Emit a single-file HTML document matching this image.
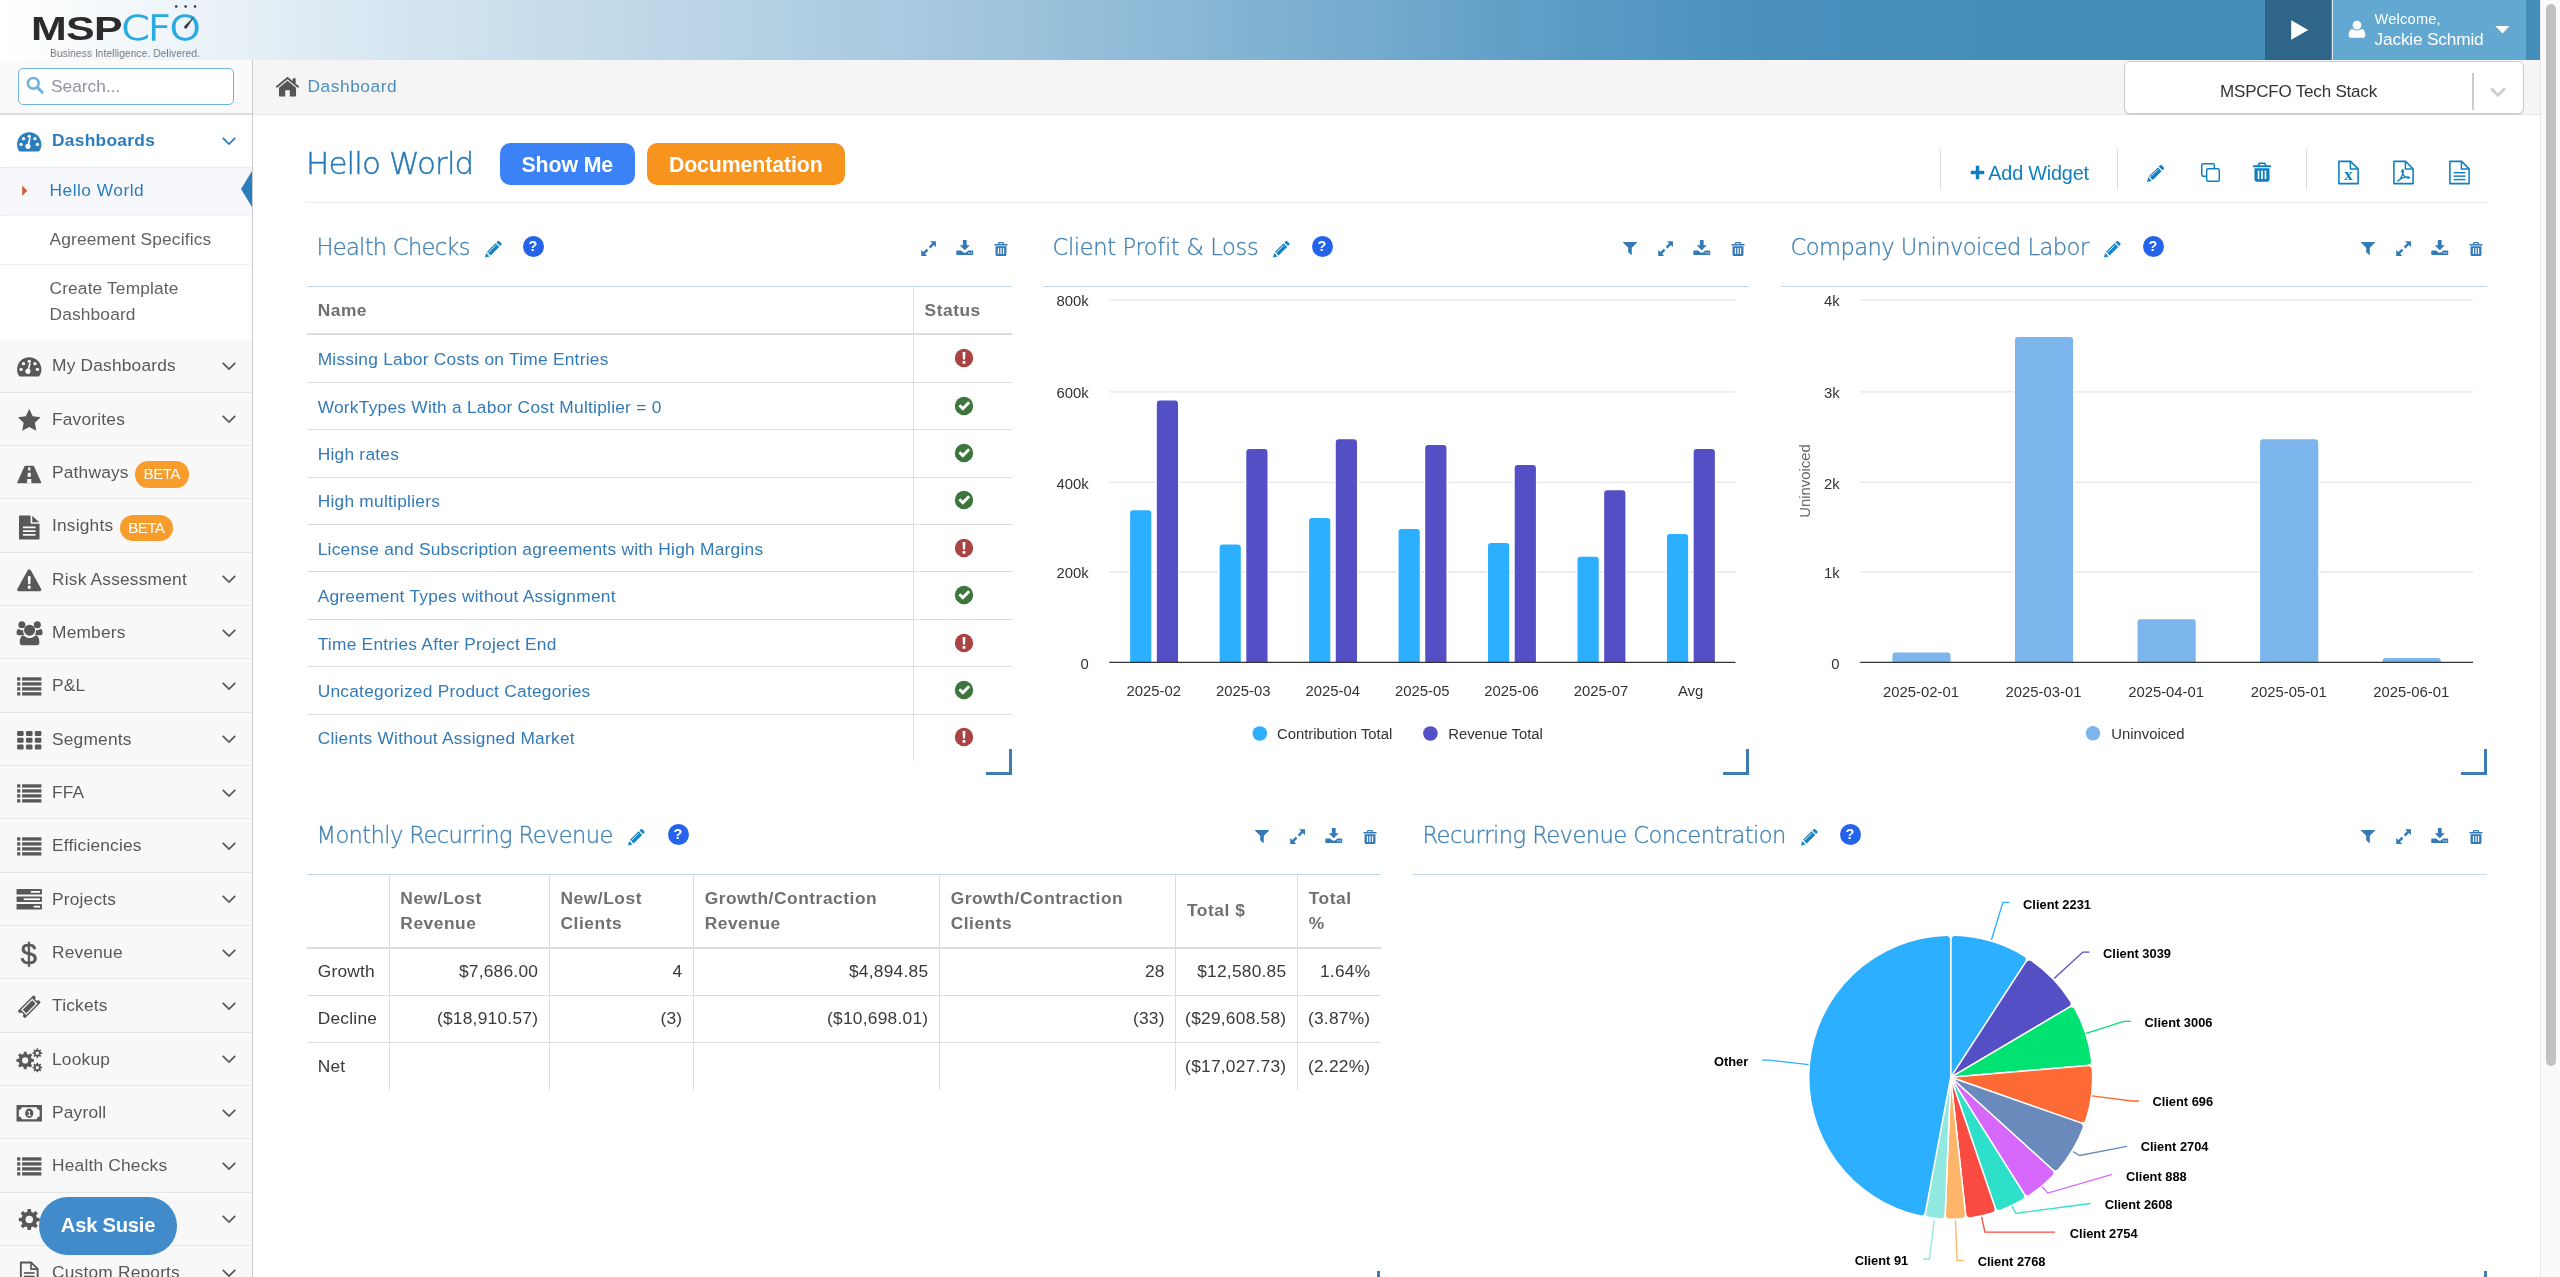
<!DOCTYPE html>
<html lang="en"><head><meta charset="utf-8"><title>Hello World - MSPCFO</title><style>
*{box-sizing:border-box;margin:0;padding:0}
html,body{width:2560px;height:1277px;overflow:hidden;background:#fff}
body{font-family:"Liberation Sans","DejaVu Sans",sans-serif;font-size:17.33px;color:#393939;position:relative;-webkit-font-smoothing:antialiased}
#app{position:absolute;left:0;top:0;width:2560px;height:1277px;will-change:transform;overflow:hidden}
.ic{display:block;overflow:visible}
.abs{position:absolute}
.lt{font-family:"DejaVu Sans Light","DejaVu Sans","Liberation Sans",sans-serif;font-weight:200}
/* header */
#hdr{position:absolute;left:0;top:0;width:2540px;height:60px;background:linear-gradient(90deg,#ffffff 0%,#f1f6fa 6%,#d4e5f0 16%,#b5d1e4 30%,#9ec3dc 40%,#7aaed0 52%,#5a9bc5 62%,#4990bd 70%,#438eb9 78%,#438eb9 100%)}
#logo{position:absolute;left:0;top:0;width:260px;height:60px}
#play{position:absolute;left:2265px;top:0;width:66px;height:60px;background:#2e6589}
#usr{position:absolute;left:2331.6px;top:0;width:194.4px;height:60px;background:#62a8d1;color:#fff;border-left:1.4px solid #dbe7f0}
#usr .t1{position:absolute;left:42px;top:9.6px;font-size:14.6px;line-height:18px;letter-spacing:.2px}
#usr .t2{position:absolute;left:42px;top:28.2px;font-size:17.33px;line-height:22px;letter-spacing:-.22px}
/* scrollbar */
#sb{position:absolute;left:2540px;top:0;width:20px;height:1277px;background:#fafafa;border-left:1.5px solid #e8e8e8}
#sb i{position:absolute;left:5px;top:4px;width:10px;height:1062px;border-radius:5px;background:#c1c1c1}
/* sidebar */
#side{position:absolute;left:0;top:60px;width:252.7px;height:1217px;background:#f8f8f8;border-right:1.5px solid #cccccc;overflow:hidden}
#srch{position:absolute;left:0;top:0;width:252px;height:54.67px;background:#fafafa;border-bottom:2px solid #dcdcdc}
#srch .box{position:absolute;left:18px;top:7.6px;width:216px;height:37px;border:1.5px solid #6fb3e0;border-radius:5px;background:#fff}
#srch .box span{position:absolute;left:32px;top:7px;font-size:17.33px;line-height:20px;color:#8d95a3;letter-spacing:0}
#nav{position:absolute;left:0;top:54.67px;width:252px}
.ni{position:relative;height:53.33px;border-top:1.33px solid #fcfcfc;border-bottom:1.33px solid #e5e5e5;background:#f8f8f8;color:#585858}
.ni .i{position:absolute;left:15.7px;top:12.8px;width:26.5px;height:26.5px}
.ni .t{position:absolute;left:52px;top:14px;font-size:17.33px;line-height:22px;white-space:nowrap;letter-spacing:.2px}
.ni .c{position:absolute;left:219px;top:15.7px;width:20px;height:20px}
.ni.act{background:#fff;color:#2b7dbc;border-bottom:0;height:52px}
.ni.act .t{font-weight:bold;letter-spacing:.3px;top:13px}
.beta{display:inline-block;position:relative;top:1.2px;background:#f89c2c;color:#fff;font-size:15.2px;line-height:26.6px;height:26.3px;padding:0 8.9px 0 8.7px;border-radius:13.2px;margin:-6px 0 -6px 6.2px;vertical-align:baseline;letter-spacing:-.6px}
.sub{background:#fff;position:relative}
.si{position:relative;border-top:1.33px dotted #e4e4e4;color:#616161;padding:9.6px 0 12.2px 49.5px;font-size:17.33px;line-height:26px;letter-spacing:.15px}
.si.on{background:#f6f7fb;color:#2b7dbc}
/* breadcrumbs */
#bc{position:absolute;left:252.5px;top:60px;width:2287.5px;height:54.67px;background:#f5f5f5;border-bottom:1.5px solid #e5e5e5}
#bc .home{position:absolute;left:22px;top:13px}
#bc .t{position:absolute;left:55px;top:15.3px;font-size:17.33px;line-height:22px;color:#4c8fbd;letter-spacing:.55px}
#sel{position:absolute;left:2123.5px;top:60.6px;width:400px;height:53.4px;background:#fff;border:1.33px solid #cccccc;border-radius:6px;box-shadow:0 1px 1px rgba(0,0,0,.08)}
#sel .t{position:absolute;left:0;width:348px;top:19px;text-align:center;font-size:17px;line-height:22px;color:#333;letter-spacing:-.2px}
#sel .d{position:absolute;left:347.6px;top:11px;width:2px;height:37.5px;background:#cccccc}
#sel .c{position:absolute;left:365px;top:21px}
/* page head */
#ttl{position:absolute;left:306px;top:141px;font-size:31px;line-height:44px;color:#2679b5;letter-spacing:-.9px;white-space:nowrap;-webkit-text-stroke:.4px #2679b5}
.btn{position:absolute;top:142.6px;height:42.8px;border-radius:10.5px;color:#fff;font-weight:bold;font-size:21.3px;line-height:44.6px;text-align:center;letter-spacing:-.1px}
#dot1{position:absolute;left:307px;top:201.500px;width:2180px;height:0;border-top:1.33px dotted #dcdcdc}
.vsep{position:absolute;top:149px;width:1.500px;height:41px;background:#dddddd}
#addw{position:absolute;left:1988.3px;top:160.5px;font-size:19.8px;line-height:24px;color:#0f7fc1;white-space:nowrap;letter-spacing:-.17px}

.wt{position:absolute;font-size:22.6px;line-height:34px;color:#4383b4;white-space:nowrap;letter-spacing:-.72px;-webkit-text-stroke:.32px #4383b4}
.wline{position:absolute;height:1.33px;background:#c3d9ea}
.help{position:absolute;width:21px;height:21px;border-radius:50%;background:#2563eb;color:#fff;font:bold 14.500px "Liberation Sans",sans-serif;line-height:21px;text-align:center}
.rz{position:absolute;width:26.5px;height:26.5px;border-right:3.4px solid #3d7db3;border-bottom:3.4px solid #3d7db3}
table.t{position:absolute;border-collapse:collapse;font-size:17.33px;letter-spacing:.25px}
table.t th{font-weight:bold;color:#707070;text-align:left;border-bottom:2.67px solid #dddddd;border-left:1.33px solid #dddddd;padding:0 0 0 10.67px;letter-spacing:.55px}
table.t td{border-top:1.33px solid #dddddd;border-left:1.33px solid #dddddd;padding:2px 0 0 10.67px;color:#393939;white-space:nowrap}
table.t th:first-child,table.t td:first-child{border-left:0}
table.t a{color:#337ab7;text-decoration:none}
table.t td.r{text-align:right;padding:2px 10.67px 0 0}
svg text{font-family:"Liberation Sans",sans-serif}

table.m th{vertical-align:middle;line-height:24.76px;padding:0 0 0 10.67px}
table.m td{padding-top:0}
table.m td.r{padding-top:0}
</style></head><body><div id="app"><div id="hdr">
<div id="logo">
 <div class="abs" style="left:31.4px;top:9.3px;font:bold 34px 'Liberation Sans',sans-serif;color:#2c2a2b;line-height:38px;transform:scale(1.262,1.0);transform-origin:0 0;letter-spacing:-.5px;will-change:transform">MSP</div>
 <div class="abs lt" style="left:120.5px;top:8.5px;font-size:34.5px;color:#29abe2;line-height:38px;letter-spacing:-1.4px;transform:scaleX(1.175);transform-origin:0 0;-webkit-text-stroke:1.35px #29abe2;will-change:transform">CFO</div>
 <svg class="abs" style="left:170px;top:0" width="34" height="44" viewBox="0 0 34 44"><g fill="#2c2a2b"><circle cx="6.200" cy="6.600" r="1.250"/><circle cx="15.600" cy="6.600" r="1.250"/><circle cx="25" cy="6.600" r="1.250"/></g><path d="M14.300 26.300L24.900 15.800 16.700 28.300a1.600 1.600 0 0 1-2.400-2z" fill="#3a3a3c"/></svg>
 <div class="abs" style="left:49.500px;top:45.8px;font-size:11.3px;line-height:14px;color:#72777d;white-space:nowrap;letter-spacing:.1px;transform:scaleX(.9);transform-origin:0 0;will-change:transform">Business Intelligence. Delivered.</div>
</div>
<div id="play"><svg class="ic " width="24" height="24" viewBox="0 0 24 24" style="color:#fff;position:absolute;left:22px;top:17.5px"><path fill="currentColor" d="M4.200 2.200l17 9.800-17 9.800z"/></svg></div>
<div id="usr"><svg class="ic " width="20" height="20" viewBox="0 0 24 24" style="color:#fff;position:absolute;left:14px;top:19px"><g fill="currentColor"><circle cx="12" cy="7.300" r="5.300"/><path d="M4.300 22.500c-1.300 0-2.300-.9-2.300-2.300 0-4.700 1.500-8 4.300-8.200.5 0 2.200 1.900 5.700 1.900s5.200-1.900 5.700-1.900c2.800.2 4.300 3.500 4.300 8.200 0 1.400-1 2.300-2.300 2.300z"/></g></svg><div class="t1">Welcome,</div><div class="t2">Jackie Schmid</div><svg class="ic " width="19" height="19" viewBox="0 0 24 24" style="color:#fff;position:absolute;left:160px;top:20px"><path fill="currentColor" d="M3 7.500h18l-9 9.500z"/></svg></div>
</div>
<div id="sb"><i></i></div><div id="side"><div id="srch"><div class="box"><svg class="ic " width="19.5" height="19.5" viewBox="0 0 24 24" style="color:#6fb3e0;position:absolute;left:5.5px;top:6.6px"><circle cx="10.200" cy="10.200" r="6.600" fill="none" stroke="currentColor" stroke-width="3.200"/><path d="M15.200 15.200l6 6" stroke="currentColor" stroke-width="3.800" stroke-linecap="round"/></svg><span>Search...</span></div></div><div id="nav"><div class="ni act"><div class="i"><svg class="ic " width="26.5" height="26.5" viewBox="0 0 24 24" style=""><g transform="translate(0 .7)"><path fill="currentColor" d="M12 3.2C5.9 3.2 1 8.1 1 14.2c0 2.1.6 4.1 1.7 5.8.2.4.6.6 1 .6h16.6c.4 0 .8-.2 1-.6 1.1-1.700 1.700-3.700 1.700-5.800C23 8.1 18.100 3.200 12 3.200z"/><g fill="#fff"><circle cx="4.600" cy="14.200" r="1.500"/><circle cx="6.800" cy="9" r="1.500"/><circle cx="12" cy="6.800" r="1.500"/><circle cx="17.200" cy="9" r="1.500"/><circle cx="19.400" cy="14.200" r="1.500"/><path d="M13.400 8.800l-1.300 5.100a2.400 2.400 0 1 1-1.500-.4l1.300-5.100z"/></g></g></svg></div><div class="t">Dashboards</div><div class="c"><svg class="ic " width="20" height="20" viewBox="0 0 24 24" style=""><path fill="none" stroke="currentColor" stroke-width="2.100" d="M4.500 8.200l7.500 7.500 7.500-7.500"/></svg></div></div><div class="sub"><div class="si on" style="letter-spacing:.5px"><svg class="ic " width="15.5" height="15.5" viewBox="0 0 24 24" style="color:#c86139;position:absolute;left:16.8px;top:15.3px"><path fill="currentColor" d="M8 4l8 8-8 8z"/></svg>Hello World<svg class="abs" style="right:0;top:3.4px" width="11" height="36" viewBox="0 0 11 36"><path d="M11 0L0 18l11 18z" fill="#2b7dbc"/></svg></div><div class="si">Agreement Specifics</div><div class="si" style="padding-top:9.4px;padding-bottom:12.8px">Create Template<br>Dashboard</div></div><div class="ni"><div class="i"><svg class="ic " width="26.5" height="26.5" viewBox="0 0 24 24" style=""><g transform="translate(0 .7)"><path fill="currentColor" d="M12 3.2C5.9 3.2 1 8.1 1 14.2c0 2.1.6 4.1 1.7 5.8.2.4.6.6 1 .6h16.6c.4 0 .8-.2 1-.6 1.1-1.700 1.700-3.700 1.700-5.800C23 8.1 18.100 3.200 12 3.200z"/><g fill="#fff"><circle cx="4.600" cy="14.200" r="1.500"/><circle cx="6.800" cy="9" r="1.500"/><circle cx="12" cy="6.800" r="1.500"/><circle cx="17.200" cy="9" r="1.500"/><circle cx="19.400" cy="14.200" r="1.500"/><path d="M13.400 8.800l-1.300 5.100a2.400 2.400 0 1 1-1.500-.4l1.300-5.100z"/></g></g></svg></div><div class="t">My Dashboards</div><div class="c"><svg class="ic " width="20" height="20" viewBox="0 0 24 24" style=""><path fill="none" stroke="currentColor" stroke-width="2.100" d="M4.500 8.200l7.500 7.500 7.500-7.500"/></svg></div></div><div class="ni"><div class="i"><svg class="ic " width="26.5" height="26.5" viewBox="0 0 24 24" style=""><path fill="currentColor" d="M12 1.800l3.150 6.550 7.150 1-5.200 5 1.250 7.150L12 18.100 5.650 21.500l1.250-7.150-5.200-5 7.150-1z"/></svg></div><div class="t">Favorites</div><div class="c"><svg class="ic " width="20" height="20" viewBox="0 0 24 24" style=""><path fill="none" stroke="currentColor" stroke-width="2.100" d="M4.500 8.200l7.500 7.500 7.500-7.500"/></svg></div></div><div class="ni"><div class="i"><svg class="ic " width="26.5" height="26.5" viewBox="0 0 24 24" style=""><path fill="currentColor" d="M8.6 5.2h6.8c.5 0 .9.3 1.100.8l6.300 14.100c.2.500-.1 1-.7 1H1.900c-.6 0-.9-.5-.7-1L7.500 6c.2-.5.6-.8 1.100-.8z"/><g fill="#f8f8f8"><path d="M11.100 6.600h1.800l.2 3h-2.200z"/><path d="M10.700 11.500h2.600l.3 3.700h-3.200z"/><path d="M10.200 17.200h3.600l.2 3.900h-4z"/></g></svg></div><div class="t">Pathways<span class="beta">BETA</span></div></div><div class="ni"><div class="i"><svg class="ic " width="26.5" height="26.5" viewBox="0 0 24 24" style=""><path fill="currentColor" d="M3.700 2.200h9.500v6.600c0 .6.400 1 1 1h7.100v13.300c0 .6-.4 1-1 1H3.700c-.6 0-1-.4-1-1v-19.900c0-.6.400-1 1-1z"/><path fill="currentColor" d="M14.700 2.500l6.300 5.800h-6.300z"/><g fill="#f8f8f8"><rect x="6.300" y="12.200" width="11.400" height="1.600"/><rect x="6.300" y="15.600" width="11.400" height="1.600"/><rect x="6.300" y="19" width="11.400" height="1.600"/></g></svg></div><div class="t">Insights<span class="beta">BETA</span></div></div><div class="ni"><div class="i"><svg class="ic " width="26.5" height="26.5" viewBox="0 0 24 24" style=""><path fill="currentColor" d="M13.300 2.700l9.500 17.200c.5.900-.1 2-1.200 2H2.400c-1.100 0-1.700-1.100-1.200-2L10.700 2.700c.5-1 2-1 2.600 0z"/><g fill="#fff"><path d="M10.700 8.400h2.600l-.3 7.300h-2z"/><rect x="10.700" y="17" width="2.600" height="2.600" rx=".3"/></g></svg></div><div class="t">Risk Assessment</div><div class="c"><svg class="ic " width="20" height="20" viewBox="0 0 24 24" style=""><path fill="none" stroke="currentColor" stroke-width="2.100" d="M4.500 8.200l7.500 7.500 7.500-7.500"/></svg></div></div><div class="ni"><div class="i"><svg class="ic " width="26.5" height="26.5" viewBox="0 0 24 24" style=""><g fill="currentColor" transform="translate(.3 0)"><circle cx="12" cy="9.200" r="5"/><path d="M5.300 22.900c-1.300 0-2.200-.9-2.200-2.200 0-3.700 1-6.700 3.400-6.700.4 0 2.500 2.300 5.500 2.300s5.100-2.300 5.500-2.300c2.400 0 3.400 3 3.400 6.700 0 1.300-.9 2.200-2.200 2.200z"/><circle cx="5" cy="4.300" r="3.200"/><circle cx="19" cy="4.300" r="3.200"/><path d="M2.700 13.900C1.300 13.900.2 13.100.2 11.900c0-1.900.5-3.700 1.900-3.700.4 0 1.400 1 2.900 1 .5 0 .9-.1 1.300-.2-.1.400-.1.800-.1 1.200 0 1.300.4 2.500 1.100 3.400-1.600.1-2.400.3-2.900.3z"/><path d="M21.300 13.900c1.400 0 2.500-.8 2.500-2 0-1.900-.5-3.700-1.900-3.700-.4 0-1.400 1-2.900 1-.5 0-.9-.1-1.300-.2.1.400.1.800.1 1.200 0 1.300-.4 2.500-1.100 3.400 1.600.1 2.400.3 2.900.3z"/></g></svg></div><div class="t">Members</div><div class="c"><svg class="ic " width="20" height="20" viewBox="0 0 24 24" style=""><path fill="none" stroke="currentColor" stroke-width="2.100" d="M4.500 8.200l7.500 7.500 7.500-7.500"/></svg></div></div><div class="ni"><div class="i"><svg class="ic " width="26.5" height="26.5" viewBox="0 0 24 24" style=""><g fill="currentColor"><rect x="1" y="3.9" width="2.900" height="3"/><rect x="5.500" y="3.9" width="17.500" height="3"/><rect x="1" y="8.4" width="2.900" height="3"/><rect x="5.500" y="8.4" width="17.500" height="3"/><rect x="1" y="12.9" width="2.900" height="3"/><rect x="5.500" y="12.9" width="17.500" height="3"/><rect x="1" y="17.4" width="2.900" height="3"/><rect x="5.500" y="17.4" width="17.500" height="3"/></g></svg></div><div class="t">P&amp;L</div><div class="c"><svg class="ic " width="20" height="20" viewBox="0 0 24 24" style=""><path fill="none" stroke="currentColor" stroke-width="2.100" d="M4.500 8.200l7.500 7.500 7.500-7.500"/></svg></div></div><div class="ni"><div class="i"><svg class="ic " width="26.5" height="26.5" viewBox="0 0 24 24" style=""><g fill="currentColor"><rect x="1" y="3.7" width="5.900" height="4.400" rx="1.100"/><rect x="9.05" y="3.7" width="5.900" height="4.400" rx="1.100"/><rect x="17.1" y="3.7" width="5.900" height="4.400" rx="1.100"/><rect x="1" y="9.8" width="5.900" height="4.400" rx="1.100"/><rect x="9.05" y="9.8" width="5.900" height="4.400" rx="1.100"/><rect x="17.1" y="9.8" width="5.900" height="4.400" rx="1.100"/><rect x="1" y="15.9" width="5.900" height="4.400" rx="1.100"/><rect x="9.05" y="15.9" width="5.900" height="4.400" rx="1.100"/><rect x="17.1" y="15.9" width="5.900" height="4.400" rx="1.100"/></g></svg></div><div class="t">Segments</div><div class="c"><svg class="ic " width="20" height="20" viewBox="0 0 24 24" style=""><path fill="none" stroke="currentColor" stroke-width="2.100" d="M4.500 8.200l7.500 7.500 7.500-7.500"/></svg></div></div><div class="ni"><div class="i"><svg class="ic " width="26.5" height="26.5" viewBox="0 0 24 24" style=""><g fill="currentColor"><rect x="1" y="3.9" width="2.900" height="3"/><rect x="5.500" y="3.9" width="17.500" height="3"/><rect x="1" y="8.4" width="2.900" height="3"/><rect x="5.500" y="8.4" width="17.500" height="3"/><rect x="1" y="12.9" width="2.900" height="3"/><rect x="5.500" y="12.9" width="17.500" height="3"/><rect x="1" y="17.4" width="2.900" height="3"/><rect x="5.500" y="17.4" width="17.500" height="3"/></g></svg></div><div class="t">FFA</div><div class="c"><svg class="ic " width="20" height="20" viewBox="0 0 24 24" style=""><path fill="none" stroke="currentColor" stroke-width="2.100" d="M4.500 8.200l7.500 7.500 7.500-7.500"/></svg></div></div><div class="ni"><div class="i"><svg class="ic " width="26.5" height="26.5" viewBox="0 0 24 24" style=""><g fill="currentColor"><rect x="1" y="3.9" width="2.900" height="3"/><rect x="5.500" y="3.9" width="17.500" height="3"/><rect x="1" y="8.4" width="2.900" height="3"/><rect x="5.500" y="8.4" width="17.500" height="3"/><rect x="1" y="12.9" width="2.900" height="3"/><rect x="5.500" y="12.9" width="17.500" height="3"/><rect x="1" y="17.4" width="2.900" height="3"/><rect x="5.500" y="17.4" width="17.500" height="3"/></g></svg></div><div class="t">Efficiencies</div><div class="c"><svg class="ic " width="20" height="20" viewBox="0 0 24 24" style=""><path fill="none" stroke="currentColor" stroke-width="2.100" d="M4.500 8.200l7.500 7.500 7.500-7.500"/></svg></div></div><div class="ni"><div class="i"><svg class="ic " width="26.5" height="26.5" viewBox="0 0 24 24" style=""><g fill="currentColor"><rect x="0.500" y="2.800" width="23" height="5" rx=".6"/><rect x="0.500" y="9.500" width="23" height="5" rx=".6"/><rect x="0.500" y="16.200" width="23" height="5" rx=".6"/></g><g fill="#fff"><rect x="13.400" y="4.500" width="8.400" height="1.600"/><rect x="7" y="11.200" width="14.800" height="1.600"/><rect x="16" y="17.900" width="5.800" height="1.600"/></g></svg></div><div class="t">Projects</div><div class="c"><svg class="ic " width="20" height="20" viewBox="0 0 24 24" style=""><path fill="none" stroke="currentColor" stroke-width="2.100" d="M4.500 8.200l7.500 7.500 7.500-7.500"/></svg></div></div><div class="ni"><div class="i" style="font:normal 29px 'Liberation Sans',sans-serif;line-height:28px;text-align:center;top:12.5px;-webkit-text-stroke:.6px #585858">$</div><div class="t">Revenue</div><div class="c"><svg class="ic " width="20" height="20" viewBox="0 0 24 24" style=""><path fill="none" stroke="currentColor" stroke-width="2.100" d="M4.500 8.200l7.500 7.500 7.500-7.500"/></svg></div></div><div class="ni"><div class="i"><svg class="ic " width="26.5" height="26.5" viewBox="0 0 24 24" style=""><g transform="translate(1.200 1.600) scale(.9) rotate(-45 12 12)"><path fill="currentColor" d="M1.500 6.800h21c.5 0 .9.400.9.900v2.300a2 2 0 0 0 0 4v2.300c0 .5-.4.900-.9.900h-21c-.5 0-.9-.4-.9-.9V14a2 2 0 0 0 0-4V7.700c0-.5.400-.9.900-.9z"/><rect x="4.600" y="8.900" width="14.800" height="6.200" fill="none" stroke="#f8f8f8" stroke-width="1.300"/></g></svg></div><div class="t">Tickets</div><div class="c"><svg class="ic " width="20" height="20" viewBox="0 0 24 24" style=""><path fill="none" stroke="currentColor" stroke-width="2.100" d="M4.500 8.200l7.500 7.500 7.500-7.500"/></svg></div></div><div class="ni"><div class="i"><svg class="ic " width="26.5" height="26.5" viewBox="0 0 24 24" style=""><path fill="currentColor" fill-rule="evenodd" d="M14.12 11.65 L16.20 11.85 L16.20 14.35 L14.12 14.55 L13.44 16.19 L14.77 17.80 L13.00 19.57 L11.39 18.24 L9.75 18.92 L9.55 21.00 L7.05 21.00 L6.85 18.92 L5.21 18.24 L3.60 19.57 L1.83 17.80 L3.16 16.19 L2.48 14.55 L0.40 14.35 L0.40 11.85 L2.48 11.65 L3.16 10.01 L1.83 8.40 L3.60 6.63 L5.21 7.96 L6.85 7.28 L7.05 5.20 L9.55 5.20 L9.75 7.28 L11.39 7.96 L13.00 6.63 L14.77 8.40 L13.44 10.01Z M11.10 13.10 A2.8 2.8 0 1 0 5.50 13.10 A2.8 2.8 0 1 0 11.10 13.10Z"/><path fill="currentColor" fill-rule="evenodd" d="M22.41 5.73 L23.65 5.81 L23.65 7.19 L22.41 7.27 L22.04 8.15 L22.86 9.09 L21.89 10.06 L20.95 9.24 L20.07 9.61 L19.99 10.85 L18.61 10.85 L18.53 9.61 L17.65 9.24 L16.71 10.06 L15.74 9.09 L16.56 8.15 L16.19 7.27 L14.95 7.19 L14.95 5.81 L16.19 5.73 L16.56 4.85 L15.74 3.91 L16.71 2.94 L17.65 3.76 L18.53 3.39 L18.61 2.15 L19.99 2.15 L20.07 3.39 L20.95 3.76 L21.89 2.94 L22.86 3.91 L22.04 4.85Z M20.80 6.50 A1.5 1.5 0 1 0 17.80 6.50 A1.5 1.5 0 1 0 20.80 6.50Z"/><path fill="currentColor" fill-rule="evenodd" d="M22.41 18.73 L23.65 18.81 L23.65 20.19 L22.41 20.27 L22.04 21.15 L22.86 22.09 L21.89 23.06 L20.95 22.24 L20.07 22.61 L19.99 23.85 L18.61 23.85 L18.53 22.61 L17.65 22.24 L16.71 23.06 L15.74 22.09 L16.56 21.15 L16.19 20.27 L14.95 20.19 L14.95 18.81 L16.19 18.73 L16.56 17.85 L15.74 16.91 L16.71 15.94 L17.65 16.76 L18.53 16.39 L18.61 15.15 L19.99 15.15 L20.07 16.39 L20.95 16.76 L21.89 15.94 L22.86 16.91 L22.04 17.85Z M20.80 19.50 A1.5 1.5 0 1 0 17.80 19.50 A1.5 1.5 0 1 0 20.80 19.50Z"/></svg></div><div class="t">Lookup</div><div class="c"><svg class="ic " width="20" height="20" viewBox="0 0 24 24" style=""><path fill="none" stroke="currentColor" stroke-width="2.100" d="M4.500 8.200l7.500 7.500 7.500-7.500"/></svg></div></div><div class="ni"><div class="i"><svg class="ic " width="26.5" height="26.5" viewBox="0 0 24 24" style=""><path fill="currentColor" fill-rule="evenodd" d="M.5 4.600h23v14.800H.5z M2.600 9a3 3 0 0 0 2.700-2.500h13.400A3 3 0 0 0 21.400 9v6a3 3 0 0 0-2.700 2.500H5.300A3 3 0 0 0 2.600 15z"/><ellipse cx="12" cy="12" rx="3.700" ry="4.300" fill="currentColor"/><text x="12" y="14.700" font-size="7.200" font-weight="bold" font-family="Liberation Serif,serif" text-anchor="middle" fill="#f8f8f8">1</text></svg></div><div class="t">Payroll</div><div class="c"><svg class="ic " width="20" height="20" viewBox="0 0 24 24" style=""><path fill="none" stroke="currentColor" stroke-width="2.100" d="M4.500 8.200l7.500 7.500 7.500-7.500"/></svg></div></div><div class="ni"><div class="i"><svg class="ic " width="26.5" height="26.5" viewBox="0 0 24 24" style=""><g fill="currentColor"><rect x="1" y="3.9" width="2.900" height="3"/><rect x="5.500" y="3.9" width="17.500" height="3"/><rect x="1" y="8.4" width="2.900" height="3"/><rect x="5.500" y="8.4" width="17.500" height="3"/><rect x="1" y="12.9" width="2.900" height="3"/><rect x="5.500" y="12.9" width="17.500" height="3"/><rect x="1" y="17.4" width="2.900" height="3"/><rect x="5.500" y="17.4" width="17.500" height="3"/></g></svg></div><div class="t">Health Checks</div><div class="c"><svg class="ic " width="20" height="20" viewBox="0 0 24 24" style=""><path fill="none" stroke="currentColor" stroke-width="2.100" d="M4.500 8.200l7.500 7.500 7.500-7.500"/></svg></div></div><div class="ni"><div class="i"><svg class="ic " width="26.5" height="26.5" viewBox="0 0 24 24" style=""><path fill="currentColor" fill-rule="evenodd" d="M18.99 10.56 L21.48 10.80 L21.48 13.80 L18.99 14.04 L18.17 16.01 L19.77 17.94 L17.64 20.07 L15.71 18.47 L13.74 19.29 L13.50 21.78 L10.50 21.78 L10.26 19.29 L8.29 18.47 L6.36 20.07 L4.23 17.94 L5.83 16.01 L5.01 14.04 L2.52 13.80 L2.52 10.80 L5.01 10.56 L5.83 8.59 L4.23 6.66 L6.36 4.53 L8.29 6.13 L10.26 5.31 L10.50 2.82 L13.50 2.82 L13.74 5.31 L15.71 6.13 L17.64 4.53 L19.77 6.66 L18.17 8.59Z M15.40 12.30 A3.4 3.4 0 1 0 8.60 12.30 A3.4 3.4 0 1 0 15.40 12.30Z"/></svg></div><div class="t">Settings</div><div class="c"><svg class="ic " width="20" height="20" viewBox="0 0 24 24" style=""><path fill="none" stroke="currentColor" stroke-width="2.100" d="M4.500 8.200l7.500 7.500 7.500-7.500"/></svg></div></div><div class="ni"><div class="i"><svg class="ic " width="26.5" height="26.5" viewBox="0 0 24 24" style=""><path fill="none" stroke="currentColor" stroke-width="1.700" stroke-linejoin="round" d="M4.400 2.300h9.400l5.800 5.800v13.600H4.400z"/><path fill="none" stroke="currentColor" stroke-width="1.500" stroke-linejoin="round" d="M13.600 2.500v5.800h5.800"/><g fill="currentColor"><rect x="7.200" y="11" width="9.600" height="1.500"/><rect x="7.200" y="14.200" width="9.600" height="1.500"/><rect x="7.200" y="17.400" width="9.600" height="1.500"/></g></svg></div><div class="t">Custom Reports</div><div class="c"><svg class="ic " width="20" height="20" viewBox="0 0 24 24" style=""><path fill="none" stroke="currentColor" stroke-width="2.100" d="M4.500 8.200l7.500 7.500 7.500-7.500"/></svg></div></div></div></div><div class="abs" style="left:39px;top:1197px;width:138px;height:57.5px;border-radius:28.75px;background:#428bca;color:#fff;font-weight:bold;font-size:20.2px;line-height:57.6px;text-align:center;letter-spacing:-.25px">Ask Susie</div><div id="bc"><svg class="ic " width="25" height="25" viewBox="0 0 24 24" style="color:#555;position:absolute;left:22.5px;top:13.5px"><g fill="currentColor"><path d="M12 2.600L.7 12l1.200 1.400L12 5l10.100 8.400 1.200-1.400-3.500-2.900V4h-2.800v2.700z"/><path d="M12 6.500l-8.200 6.800v7.500c0 .4.300.7.700.7h5.300v-5.800h4.400v5.800h5.300c.4 0 .7-.3.700-.7v-7.500z"/></g></svg><div class="t">Dashboard</div></div>
<div id="sel"><div class="t">MSPCFO Tech Stack</div><div class="d"></div><svg class="ic " width="22" height="22" viewBox="0 0 24 24" style="color:#cccccc;position:absolute;left:362px;top:19.5px"><path fill="none" stroke="currentColor" stroke-width="2.900" d="M4.500 8.200l7.500 7.500 7.500-7.500"/></svg></div><div id="ttl" class="lt">Hello World</div><div class="btn" style="left:500px;width:134.500px;background:#3b82f6">Show Me</div><div class="btn" style="left:647px;width:197.500px;background:#f7941e">Documentation</div><div id="dot1"></div><div class="vsep" style="left:1939.5px"></div><div class="vsep" style="left:2116.5px"></div><div class="vsep" style="left:2305.5px"></div><svg class="ic " width="17" height="17" viewBox="0 0 24 24" style="color:#0f7fc1;position:absolute;left:1969px;top:163.500px"><path fill="currentColor" d="M9.600 2.500h4.800v7.100h7.100v4.800h-7.100v7.100H9.600v-7.100H2.500V9.600h7.100z"/></svg><div id="addw">Add Widget</div><svg class="ic " width="20" height="20" viewBox="0 0 24 24" style="color:#0f7fc1;position:absolute;left:2145px;top:163.5px"><g fill="currentColor"><path d="M2.500 21.500l1.300-5.600 4.300 4.300z"/><path d="M4.900 14.600L15.400 4.100l4.500 4.500L9.400 19.100z"/><path d="M16.500 3l1.300-1.300c.7-.7 1.700-.7 2.400 0l2.100 2.100c.7.700.7 1.700 0 2.400L21 7.500z"/></g><path d="M6.600 15.400l8.800-8.800" stroke="#fff" stroke-width="1.100"/></svg><svg class="ic " width="21" height="21" viewBox="0 0 24 24" style="color:#0f7fc1;position:absolute;left:2199.500px;top:161.500px"><g fill="none" stroke="currentColor" stroke-width="1.700"><rect x="7.600" y="7.600" width="14.400" height="14.400" rx="1.800"/><path d="M16.400 7.400V3.800c0-1-.8-1.800-1.800-1.800H3.800C2.800 2 2 2.800 2 3.800v10.800c0 1 .8 1.800 1.800 1.800h3.600"/></g></svg><svg class="ic " width="22" height="22" viewBox="0 0 24 24" style="color:#0f7fc1;position:absolute;left:2251px;top:160.500px"><g fill="currentColor"><path d="M8.400 1.600h7.200l1.300 2.900h4.300c.4 0 .7.300.7.700v1c0 .4-.3.700-.7.700H2.800c-.4 0-.7-.3-.7-.7v-1c0-.4.300-.7.700-.7h4.300z M9.600 3.300l-.5 1.200h5.800l-.5-1.200z" fill-rule="evenodd"/><path fill-rule="evenodd" d="M3.800 8h16.400v12.200c0 1.300-1 2.300-2.200 2.300H6c-1.200 0-2.200-1-2.200-2.300z M7.300 10.400v9.200h1.800v-9.200z M11.100 10.400v9.200h1.800v-9.200z M14.900 10.400v9.200h1.800v-9.200z"/></g></svg><svg class="ic " width="25" height="25" viewBox="0 0 24 24" style="color:#0f7fc1;position:absolute;left:2336px;top:159.500px"><path fill="none" stroke="currentColor" stroke-width="1.500" stroke-linejoin="round" d="M2.800 1.300h11.200l7.200 7.200v14.200H2.800z"/><path fill="none" stroke="currentColor" stroke-width="1.400" stroke-linejoin="round" d="M13.800 1.500v7.200h7.200"/></svg><div class="abs" style="left:2340px;top:166px;width:17px;text-align:center;font:bold 17px 'Liberation Serif',serif;line-height:18px;color:#0f7fc1">x</div><svg class="ic " width="25" height="25" viewBox="0 0 24 24" style="color:#0f7fc1;position:absolute;left:2391px;top:159.500px"><path fill="none" stroke="currentColor" stroke-width="1.500" stroke-linejoin="round" d="M2.800 1.300h11.200l7.200 7.200v14.200H2.800z"/><path fill="none" stroke="currentColor" stroke-width="1.400" stroke-linejoin="round" d="M13.800 1.500v7.200h7.200"/><path fill="none" stroke="currentColor" stroke-width="1.200" stroke-linejoin="round" d="M6.400 20.300c1.800-1 3.400-3.400 4.600-6.400.8-2 1.100-3.800.4-4.400-.8-.6-1.200.6-.7 2.300.7 2.400 2.700 4.700 4.800 5.400 1.400.5 2.600.2 2.300-.5-.3-.7-2.300-.7-4.600-.2-2.400.5-4.800 1.500-6.800 3.800z"/></svg><svg class="ic " width="25" height="25" viewBox="0 0 24 24" style="color:#0f7fc1;position:absolute;left:2446.500px;top:159.500px"><path fill="none" stroke="currentColor" stroke-width="1.500" stroke-linejoin="round" d="M2.800 1.300h11.200l7.200 7.200v14.200H2.800z"/><path fill="none" stroke="currentColor" stroke-width="1.400" stroke-linejoin="round" d="M13.800 1.500v7.200h7.200"/><g fill="currentColor"><rect x="6.300" y="11.500" width="11.400" height="1.400"/><rect x="6.300" y="14.800" width="11.400" height="1.400"/><rect x="6.300" y="18.100" width="11.400" height="1.400"/></g></svg><div class="wt lt" style="left:316.5px;top:230.3px;letter-spacing:-0.72px">Health Checks</div><svg class="ic " width="19.5" height="19.5" viewBox="0 0 24 24" style="color:#1185c9;position:absolute;left:483.15px;top:240.25px"><g fill="currentColor"><path d="M2.500 21.500l1.300-5.600 4.300 4.300z"/><path d="M4.900 14.600L15.400 4.100l4.500 4.500L9.400 19.100z"/><path d="M16.500 3l1.300-1.300c.7-.7 1.700-.7 2.400 0l2.100 2.100c.7.700.7 1.700 0 2.400L21 7.500z"/></g><path d="M6.600 15.400l8.800-8.800" stroke="#fff" stroke-width="1.100"/></svg><div class="help" style="left:522.5px;top:236px">?</div><svg class="ic " width="16" height="16" viewBox="0 0 24 24" style="color:#337ab7;position:absolute;left:993.0px;top:240.60000000000002px"><g fill="currentColor"><path d="M8.400 1.600h7.200l1.300 2.900h4.300c.4 0 .7.300.7.700v1c0 .4-.3.700-.7.700H2.800c-.4 0-.7-.3-.7-.7v-1c0-.4.300-.7.700-.7h4.300z M9.600 3.300l-.5 1.200h5.800l-.5-1.200z" fill-rule="evenodd"/><path fill-rule="evenodd" d="M3.800 8h16.400v12.200c0 1.300-1 2.300-2.200 2.300H6c-1.200 0-2.200-1-2.200-2.300z M7.300 10.400v9.200h1.800v-9.200z M11.100 10.400v9.200h1.800v-9.200z M14.900 10.400v9.200h1.800v-9.200z"/></g></svg><svg class="ic " width="17.5" height="17.5" viewBox="0 0 24 24" style="color:#337ab7;position:absolute;left:956.25px;top:238.55px"><g fill="currentColor"><path d="M9.400 1.500h5.200v7h4.300L12 15.400 5.100 8.500h4.300z"/><path fill-rule="evenodd" d="M1.400 15.600h5.700l2.200 2.200c1.500 1.500 3.900 1.500 5.400 0l2.200-2.200h5.700c.6 0 1 .4 1 1v4.500c0 .6-.4 1-1 1H1.400c-.6 0-1-.4-1-1v-4.500c0-.6.400-1 1-1z M16.800 19.200a.9.9 0 1 0 1.800 0 .9.9 0 1 0-1.800 0z M20 19.200a.9.9 0 1 0 1.800 0 .9.900 0 1 0-1.800 0z"/></g></svg><svg class="ic " width="19.2" height="19.2" viewBox="0 0 24 24" style="color:#337ab7;position:absolute;left:919.4px;top:239.20000000000002px"><g fill="currentColor"><path d="M13.800 2.800h7.400v7.400l-2.600-2.600-4.200 4.200-2.200-2.200 4.200-4.200z"/><path d="M10.200 21.200H2.800v-7.400l2.600 2.600 4.200-4.200 2.200 2.200-4.200 4.200z"/></g></svg><div class="wline" style="left:307px;top:285.7px;width:705px"></div><table class="t" style="left:307px;top:287.3px;width:705px"><tr style="height:47px"><th style="width:606.4px">Name</th><th>Status</th></tr><tr style="height:48.1px"><td><a>Missing Labor Costs on Time Entries</a></td><td><svg class="ic " width="20" height="20" viewBox="0 0 24 24" style="color:#a94442;margin:0 auto;position:relative;left:-4.6px;top:-1.4px"><circle cx="12" cy="12" r="11" fill="currentColor"/><g fill="#fff"><path d="M10.300 4.800h3.400l-.4 9h-2.600z"/><rect x="10.300" y="15.600" width="3.400" height="3.300" rx=".4"/></g></svg></td></tr><tr style="height:47.4px"><td><a>WorkTypes With a Labor Cost Multiplier = 0</a></td><td><svg class="ic " width="20" height="20" viewBox="0 0 24 24" style="color:#3c763d;margin:0 auto;position:relative;left:-4.6px;top:-1.4px"><circle cx="12" cy="12" r="11" fill="currentColor"/><path fill="#fff" d="M18.900 9.300l-7.700 7.700c-.4.400-.9.400-1.300 0l-4.100-4.100c-.4-.4-.4-.9 0-1.300l1.200-1.200c.4-.4.900-.4 1.300 0l2.300 2.300 5.800-5.900c.4-.4.900-.4 1.300 0l1.200 1.200c.4.400.4.900 0 1.300z"/></svg></td></tr><tr style="height:47.4px"><td><a>High rates</a></td><td><svg class="ic " width="20" height="20" viewBox="0 0 24 24" style="color:#3c763d;margin:0 auto;position:relative;left:-4.6px;top:-1.4px"><circle cx="12" cy="12" r="11" fill="currentColor"/><path fill="#fff" d="M18.900 9.300l-7.700 7.700c-.4.400-.9.400-1.300 0l-4.100-4.100c-.4-.4-.4-.9 0-1.300l1.200-1.200c.4-.4.900-.4 1.300 0l2.300 2.300 5.800-5.900c.4-.4.900-.4 1.300 0l1.200 1.200c.4.400.4.900 0 1.300z"/></svg></td></tr><tr style="height:47.4px"><td><a>High multipliers</a></td><td><svg class="ic " width="20" height="20" viewBox="0 0 24 24" style="color:#3c763d;margin:0 auto;position:relative;left:-4.6px;top:-1.4px"><circle cx="12" cy="12" r="11" fill="currentColor"/><path fill="#fff" d="M18.900 9.300l-7.700 7.700c-.4.400-.9.400-1.300 0l-4.100-4.100c-.4-.4-.4-.9 0-1.300l1.200-1.200c.4-.4.900-.4 1.300 0l2.300 2.300 5.800-5.900c.4-.4.900-.4 1.300 0l1.200 1.200c.4.400.4.900 0 1.300z"/></svg></td></tr><tr style="height:47.4px"><td><a>License and Subscription agreements with High Margins</a></td><td><svg class="ic " width="20" height="20" viewBox="0 0 24 24" style="color:#a94442;margin:0 auto;position:relative;left:-4.6px;top:-1.4px"><circle cx="12" cy="12" r="11" fill="currentColor"/><g fill="#fff"><path d="M10.300 4.800h3.400l-.4 9h-2.600z"/><rect x="10.300" y="15.600" width="3.400" height="3.300" rx=".4"/></g></svg></td></tr><tr style="height:47.4px"><td><a>Agreement Types without Assignment</a></td><td><svg class="ic " width="20" height="20" viewBox="0 0 24 24" style="color:#3c763d;margin:0 auto;position:relative;left:-4.6px;top:-1.4px"><circle cx="12" cy="12" r="11" fill="currentColor"/><path fill="#fff" d="M18.900 9.300l-7.700 7.700c-.4.400-.9.400-1.300 0l-4.100-4.100c-.4-.4-.4-.9 0-1.300l1.200-1.200c.4-.4.900-.4 1.300 0l2.300 2.300 5.800-5.900c.4-.4.900-.4 1.300 0l1.200 1.200c.4.400.4.900 0 1.300z"/></svg></td></tr><tr style="height:47.4px"><td><a>Time Entries After Project End</a></td><td><svg class="ic " width="20" height="20" viewBox="0 0 24 24" style="color:#a94442;margin:0 auto;position:relative;left:-4.6px;top:-1.4px"><circle cx="12" cy="12" r="11" fill="currentColor"/><g fill="#fff"><path d="M10.300 4.800h3.400l-.4 9h-2.600z"/><rect x="10.300" y="15.600" width="3.400" height="3.300" rx=".4"/></g></svg></td></tr><tr style="height:47.4px"><td><a>Uncategorized Product Categories</a></td><td><svg class="ic " width="20" height="20" viewBox="0 0 24 24" style="color:#3c763d;margin:0 auto;position:relative;left:-4.6px;top:-1.4px"><circle cx="12" cy="12" r="11" fill="currentColor"/><path fill="#fff" d="M18.900 9.300l-7.700 7.700c-.4.400-.9.400-1.300 0l-4.100-4.100c-.4-.4-.4-.9 0-1.300l1.200-1.200c.4-.4.900-.4 1.300 0l2.300 2.300 5.800-5.900c.4-.4.900-.4 1.300 0l1.200 1.200c.4.400.4.900 0 1.300z"/></svg></td></tr><tr style="height:46.5px"><td><a>Clients Without Assigned Market</a></td><td><svg class="ic " width="20" height="20" viewBox="0 0 24 24" style="color:#a94442;margin:0 auto;position:relative;left:-4.6px;top:-1.4px"><circle cx="12" cy="12" r="11" fill="currentColor"/><g fill="#fff"><path d="M10.300 4.800h3.400l-.4 9h-2.600z"/><rect x="10.300" y="15.600" width="3.400" height="3.300" rx=".4"/></g></svg></td></tr></table><div class="rz" style="left:985.5px;top:748.6px"></div><div class="wt lt" style="left:1052.5px;top:230.3px;letter-spacing:-0.36px">Client Profit &amp; Loss</div><svg class="ic " width="19.5" height="19.5" viewBox="0 0 24 24" style="color:#1185c9;position:absolute;left:1271.15px;top:240.25px"><g fill="currentColor"><path d="M2.500 21.500l1.300-5.600 4.300 4.300z"/><path d="M4.900 14.600L15.400 4.100l4.500 4.500L9.400 19.100z"/><path d="M16.500 3l1.300-1.300c.7-.7 1.700-.7 2.400 0l2.100 2.100c.7.700.7 1.700 0 2.400L21 7.500z"/></g><path d="M6.600 15.400l8.800-8.800" stroke="#fff" stroke-width="1.100"/></svg><div class="help" style="left:1311.5px;top:236px">?</div><svg class="ic " width="16" height="16" viewBox="0 0 24 24" style="color:#337ab7;position:absolute;left:1730.0px;top:240.60000000000002px"><g fill="currentColor"><path d="M8.400 1.600h7.200l1.300 2.900h4.300c.4 0 .7.300.7.700v1c0 .4-.3.700-.7.700H2.800c-.4 0-.7-.3-.7-.7v-1c0-.4.300-.7.700-.7h4.300z M9.600 3.300l-.5 1.200h5.800l-.5-1.200z" fill-rule="evenodd"/><path fill-rule="evenodd" d="M3.800 8h16.400v12.200c0 1.300-1 2.300-2.200 2.300H6c-1.200 0-2.200-1-2.200-2.300z M7.300 10.400v9.200h1.800v-9.200z M11.100 10.400v9.200h1.800v-9.200z M14.900 10.400v9.200h1.800v-9.200z"/></g></svg><svg class="ic " width="17.5" height="17.5" viewBox="0 0 24 24" style="color:#337ab7;position:absolute;left:1693.25px;top:238.55px"><g fill="currentColor"><path d="M9.400 1.500h5.200v7h4.300L12 15.400 5.100 8.500h4.300z"/><path fill-rule="evenodd" d="M1.400 15.600h5.700l2.200 2.200c1.500 1.500 3.900 1.500 5.400 0l2.200-2.200h5.700c.6 0 1 .4 1 1v4.500c0 .6-.4 1-1 1H1.400c-.6 0-1-.4-1-1v-4.500c0-.6.400-1 1-1z M16.800 19.200a.9.9 0 1 0 1.800 0 .9.9 0 1 0-1.800 0z M20 19.200a.9.9 0 1 0 1.800 0 .9.900 0 1 0-1.800 0z"/></g></svg><svg class="ic " width="19.2" height="19.2" viewBox="0 0 24 24" style="color:#337ab7;position:absolute;left:1656.4px;top:239.20000000000002px"><g fill="currentColor"><path d="M13.800 2.800h7.400v7.400l-2.600-2.600-4.200 4.200-2.200-2.200 4.200-4.200z"/><path d="M10.200 21.200H2.800v-7.400l2.600 2.600 4.200-4.200 2.200 2.200-4.200 4.200z"/></g></svg><svg class="ic " width="16" height="16" viewBox="0 0 24 24" style="color:#337ab7;position:absolute;left:1622.0px;top:240.3px"><path fill="currentColor" d="M2.300 3h19.400c.7 0 1 .8.500 1.300l-7.500 7.500v9.800c0 .7-.7 1-1.200.6l-3.800-3.400c-.3-.2-.4-.5-.4-.9v-6.100L1.800 4.300C1.300 3.800 1.600 3 2.300 3z"/></svg><div class="wline" style="left:1043px;top:285.7px;width:706px"></div><svg class="abs" style="left:1043px;top:288px" width="706" height="470" viewBox="1043 288 706 470"><line x1="1109.2" x2="1735.5" y1="299.8" y2="299.8" stroke="#e6e6e6" stroke-width="1.33"/><line x1="1109.2" x2="1735.5" y1="391.8" y2="391.8" stroke="#e6e6e6" stroke-width="1.33"/><line x1="1109.2" x2="1735.5" y1="482.4" y2="482.4" stroke="#e6e6e6" stroke-width="1.33"/><line x1="1109.2" x2="1735.5" y1="572.0" y2="572.0" stroke="#e6e6e6" stroke-width="1.33"/><text x="1088.8" y="306.1" text-anchor="end" font-size="14.85" fill="#333333">800k</text><text x="1088.8" y="398.1" text-anchor="end" font-size="14.85" fill="#333333">600k</text><text x="1088.8" y="488.7" text-anchor="end" font-size="14.85" fill="#333333">400k</text><text x="1088.8" y="578.3" text-anchor="end" font-size="14.85" fill="#333333">200k</text><text x="1088.8" y="668.6999999999999" text-anchor="end" font-size="14.85" fill="#333333">0</text><path fill="#2caffe" stroke="#ffffff" stroke-width="2.67" paint-order="stroke" d="M1130.14 662.40V513.50a3.2 3.2 0 0 1 3.2 -3.2h14.80a3.2 3.2 0 0 1 3.2 3.2V662.40z"/><path fill="#544fc5" stroke="#ffffff" stroke-width="2.67" paint-order="stroke" d="M1156.84 662.40V403.80a3.2 3.2 0 0 1 3.2 -3.2h14.80a3.2 3.2 0 0 1 3.2 3.2V662.40z"/><text x="1153.7" y="696.3" text-anchor="middle" font-size="14.85" fill="#333333">2025-02</text><path fill="#2caffe" stroke="#ffffff" stroke-width="2.67" paint-order="stroke" d="M1219.61 662.40V547.80a3.2 3.2 0 0 1 3.2 -3.2h14.80a3.2 3.2 0 0 1 3.2 3.2V662.40z"/><path fill="#544fc5" stroke="#ffffff" stroke-width="2.67" paint-order="stroke" d="M1246.31 662.40V452.10a3.2 3.2 0 0 1 3.2 -3.2h14.80a3.2 3.2 0 0 1 3.2 3.2V662.40z"/><text x="1243.2" y="696.3" text-anchor="middle" font-size="14.85" fill="#333333">2025-03</text><path fill="#2caffe" stroke="#ffffff" stroke-width="2.67" paint-order="stroke" d="M1309.08 662.40V521.20a3.2 3.2 0 0 1 3.2 -3.2h14.80a3.2 3.2 0 0 1 3.2 3.2V662.40z"/><path fill="#544fc5" stroke="#ffffff" stroke-width="2.67" paint-order="stroke" d="M1335.78 662.40V442.50a3.2 3.2 0 0 1 3.2 -3.2h14.80a3.2 3.2 0 0 1 3.2 3.2V662.40z"/><text x="1332.7" y="696.3" text-anchor="middle" font-size="14.85" fill="#333333">2025-04</text><path fill="#2caffe" stroke="#ffffff" stroke-width="2.67" paint-order="stroke" d="M1398.55 662.40V532.20a3.2 3.2 0 0 1 3.2 -3.2h14.80a3.2 3.2 0 0 1 3.2 3.2V662.40z"/><path fill="#544fc5" stroke="#ffffff" stroke-width="2.67" paint-order="stroke" d="M1425.25 662.40V448.10a3.2 3.2 0 0 1 3.2 -3.2h14.80a3.2 3.2 0 0 1 3.2 3.2V662.40z"/><text x="1422.2" y="696.3" text-anchor="middle" font-size="14.85" fill="#333333">2025-05</text><path fill="#2caffe" stroke="#ffffff" stroke-width="2.67" paint-order="stroke" d="M1488.02 662.40V546.20a3.2 3.2 0 0 1 3.2 -3.2h14.80a3.2 3.2 0 0 1 3.2 3.2V662.40z"/><path fill="#544fc5" stroke="#ffffff" stroke-width="2.67" paint-order="stroke" d="M1514.72 662.40V468.10a3.2 3.2 0 0 1 3.2 -3.2h14.80a3.2 3.2 0 0 1 3.2 3.2V662.40z"/><text x="1511.6" y="696.3" text-anchor="middle" font-size="14.85" fill="#333333">2025-06</text><path fill="#2caffe" stroke="#ffffff" stroke-width="2.67" paint-order="stroke" d="M1577.49 662.40V560.00a3.2 3.2 0 0 1 3.2 -3.2h14.80a3.2 3.2 0 0 1 3.2 3.2V662.40z"/><path fill="#544fc5" stroke="#ffffff" stroke-width="2.67" paint-order="stroke" d="M1604.19 662.40V493.40a3.2 3.2 0 0 1 3.2 -3.2h14.80a3.2 3.2 0 0 1 3.2 3.2V662.40z"/><text x="1601.1" y="696.3" text-anchor="middle" font-size="14.85" fill="#333333">2025-07</text><path fill="#2caffe" stroke="#ffffff" stroke-width="2.67" paint-order="stroke" d="M1666.96 662.40V537.20a3.2 3.2 0 0 1 3.2 -3.2h14.80a3.2 3.2 0 0 1 3.2 3.2V662.40z"/><path fill="#544fc5" stroke="#ffffff" stroke-width="2.67" paint-order="stroke" d="M1693.66 662.40V452.10a3.2 3.2 0 0 1 3.2 -3.2h14.80a3.2 3.2 0 0 1 3.2 3.2V662.40z"/><text x="1690.6" y="696.3" text-anchor="middle" font-size="14.85" fill="#333333">Avg</text><line x1="1109.2" x2="1735.5" y1="662.4" y2="662.4" stroke="#333333" stroke-width="1.33"/><circle cx="1259.8" cy="733.5" r="7.3" fill="#2caffe"/><text x="1277" y="738.8" font-size="14.85" fill="#333333">Contribution Total</text><circle cx="1430.4" cy="733.5" r="7.3" fill="#544fc5"/><text x="1448.2" y="738.8" font-size="14.85" fill="#333333">Revenue Total</text></svg><div class="rz" style="left:1722.5px;top:748.6px"></div><div class="wt lt" style="left:1790.5px;top:230.3px;letter-spacing:-0.55px">Company Uninvoiced Labor</div><svg class="ic " width="19.5" height="19.5" viewBox="0 0 24 24" style="color:#1185c9;position:absolute;left:2102.15px;top:240.25px"><g fill="currentColor"><path d="M2.500 21.500l1.300-5.600 4.300 4.300z"/><path d="M4.900 14.600L15.400 4.100l4.500 4.500L9.400 19.100z"/><path d="M16.500 3l1.300-1.300c.7-.7 1.700-.7 2.400 0l2.100 2.100c.7.700.7 1.700 0 2.400L21 7.500z"/></g><path d="M6.600 15.400l8.800-8.800" stroke="#fff" stroke-width="1.100"/></svg><div class="help" style="left:2142.5px;top:236px">?</div><svg class="ic " width="16" height="16" viewBox="0 0 24 24" style="color:#337ab7;position:absolute;left:2468.0px;top:240.60000000000002px"><g fill="currentColor"><path d="M8.400 1.600h7.200l1.300 2.900h4.300c.4 0 .7.300.7.700v1c0 .4-.3.700-.7.700H2.800c-.4 0-.7-.3-.7-.7v-1c0-.4.300-.7.700-.7h4.300z M9.600 3.300l-.5 1.200h5.800l-.5-1.200z" fill-rule="evenodd"/><path fill-rule="evenodd" d="M3.800 8h16.400v12.200c0 1.300-1 2.300-2.200 2.300H6c-1.200 0-2.200-1-2.200-2.300z M7.300 10.400v9.200h1.800v-9.200z M11.100 10.400v9.200h1.800v-9.200z M14.900 10.400v9.200h1.800v-9.200z"/></g></svg><svg class="ic " width="17.5" height="17.5" viewBox="0 0 24 24" style="color:#337ab7;position:absolute;left:2431.25px;top:238.55px"><g fill="currentColor"><path d="M9.400 1.500h5.200v7h4.300L12 15.400 5.100 8.500h4.300z"/><path fill-rule="evenodd" d="M1.400 15.600h5.700l2.200 2.200c1.500 1.500 3.900 1.500 5.400 0l2.200-2.200h5.700c.6 0 1 .4 1 1v4.500c0 .6-.4 1-1 1H1.400c-.6 0-1-.4-1-1v-4.500c0-.6.400-1 1-1z M16.800 19.200a.9.9 0 1 0 1.800 0 .9.9 0 1 0-1.800 0z M20 19.200a.9.9 0 1 0 1.800 0 .9.900 0 1 0-1.800 0z"/></g></svg><svg class="ic " width="19.2" height="19.2" viewBox="0 0 24 24" style="color:#337ab7;position:absolute;left:2394.4px;top:239.20000000000002px"><g fill="currentColor"><path d="M13.800 2.800h7.400v7.400l-2.600-2.600-4.200 4.200-2.200-2.200 4.200-4.200z"/><path d="M10.200 21.200H2.800v-7.400l2.600 2.600 4.200-4.200 2.200 2.200-4.200 4.200z"/></g></svg><svg class="ic " width="16" height="16" viewBox="0 0 24 24" style="color:#337ab7;position:absolute;left:2360.0px;top:240.3px"><path fill="currentColor" d="M2.300 3h19.400c.7 0 1 .8.500 1.300l-7.500 7.500v9.800c0 .7-.7 1-1.200.6l-3.800-3.400c-.3-.2-.4-.5-.4-.9v-6.100L1.800 4.300C1.300 3.800 1.600 3 2.300 3z"/></svg><div class="wline" style="left:1781px;top:285.7px;width:706px"></div><svg class="abs" style="left:1781px;top:288px" width="706" height="470" viewBox="1781 288 706 470"><line x1="1860.2" x2="2473" y1="299.8" y2="299.8" stroke="#e6e6e6" stroke-width="1.33"/><line x1="1860.2" x2="2473" y1="391.8" y2="391.8" stroke="#e6e6e6" stroke-width="1.33"/><line x1="1860.2" x2="2473" y1="482.4" y2="482.4" stroke="#e6e6e6" stroke-width="1.33"/><line x1="1860.2" x2="2473" y1="572.0" y2="572.0" stroke="#e6e6e6" stroke-width="1.33"/><text x="1839.6" y="306.1" text-anchor="end" font-size="14.85" fill="#333333">4k</text><text x="1839.6" y="398.1" text-anchor="end" font-size="14.85" fill="#333333">3k</text><text x="1839.6" y="488.7" text-anchor="end" font-size="14.85" fill="#333333">2k</text><text x="1839.6" y="578.3" text-anchor="end" font-size="14.85" fill="#333333">1k</text><text x="1839.6" y="668.6999999999999" text-anchor="end" font-size="14.85" fill="#333333">0</text><path fill="#7cb5ec" stroke="#ffffff" stroke-width="2.67" paint-order="stroke" d="M1892.38 662.40V655.80a3.2 3.2 0 0 1 3.2 -3.2h51.80a3.2 3.2 0 0 1 3.2 3.2V662.40z"/><text x="1921.0" y="696.5" text-anchor="middle" font-size="14.85" fill="#333333">2025-02-01</text><path fill="#7cb5ec" stroke="#ffffff" stroke-width="2.67" paint-order="stroke" d="M2014.94 662.40V340.20a3.2 3.2 0 0 1 3.2 -3.2h51.80a3.2 3.2 0 0 1 3.2 3.2V662.40z"/><text x="2043.5" y="696.5" text-anchor="middle" font-size="14.85" fill="#333333">2025-03-01</text><path fill="#7cb5ec" stroke="#ffffff" stroke-width="2.67" paint-order="stroke" d="M2137.50 662.40V622.40a3.2 3.2 0 0 1 3.2 -3.2h51.80a3.2 3.2 0 0 1 3.2 3.2V662.40z"/><text x="2166.1" y="696.5" text-anchor="middle" font-size="14.85" fill="#333333">2025-04-01</text><path fill="#7cb5ec" stroke="#ffffff" stroke-width="2.67" paint-order="stroke" d="M2260.06 662.40V442.40a3.2 3.2 0 0 1 3.2 -3.2h51.80a3.2 3.2 0 0 1 3.2 3.2V662.40z"/><text x="2288.7" y="696.5" text-anchor="middle" font-size="14.85" fill="#333333">2025-05-01</text><path fill="#7cb5ec" stroke="#ffffff" stroke-width="2.67" paint-order="stroke" d="M2382.62 662.40V661.10a3.2 3.2 0 0 1 3.2 -3.2h51.80a3.2 3.2 0 0 1 3.2 3.2V662.40z"/><text x="2411.2" y="696.5" text-anchor="middle" font-size="14.85" fill="#333333">2025-06-01</text><line x1="1860.2" x2="2473" y1="662.4" y2="662.4" stroke="#333333" stroke-width="1.33"/><text transform="translate(1810.4 481) rotate(-90)" text-anchor="middle" font-size="14.9" fill="#666666">Uninvoiced</text><circle cx="2093" cy="733.3" r="7.2" fill="#7cb5ec"/><text x="2111.2" y="738.8" font-size="14.85" fill="#333333">Uninvoiced</text></svg><div class="rz" style="left:2460.5px;top:748.6px"></div><div class="wt lt" style="left:316.5px;top:818.3px;letter-spacing:-0.6px">Monthly Recurring Revenue</div><svg class="ic " width="19.5" height="19.5" viewBox="0 0 24 24" style="color:#1185c9;position:absolute;left:626.15px;top:828.25px"><g fill="currentColor"><path d="M2.500 21.500l1.300-5.600 4.300 4.300z"/><path d="M4.900 14.600L15.400 4.100l4.500 4.500L9.400 19.100z"/><path d="M16.500 3l1.300-1.300c.7-.7 1.700-.7 2.400 0l2.100 2.100c.7.700.7 1.700 0 2.400L21 7.500z"/></g><path d="M6.600 15.400l8.800-8.800" stroke="#fff" stroke-width="1.100"/></svg><div class="help" style="left:667.5px;top:824px">?</div><svg class="ic " width="16" height="16" viewBox="0 0 24 24" style="color:#337ab7;position:absolute;left:1362.0px;top:828.5999999999999px"><g fill="currentColor"><path d="M8.400 1.600h7.200l1.300 2.900h4.300c.4 0 .7.300.7.700v1c0 .4-.3.700-.7.700H2.800c-.4 0-.7-.3-.7-.7v-1c0-.4.300-.7.700-.7h4.300z M9.600 3.300l-.5 1.200h5.800l-.5-1.200z" fill-rule="evenodd"/><path fill-rule="evenodd" d="M3.800 8h16.400v12.200c0 1.300-1 2.300-2.200 2.300H6c-1.200 0-2.200-1-2.200-2.300z M7.300 10.400v9.200h1.800v-9.200z M11.100 10.400v9.200h1.800v-9.200z M14.900 10.400v9.200h1.800v-9.200z"/></g></svg><svg class="ic " width="17.5" height="17.5" viewBox="0 0 24 24" style="color:#337ab7;position:absolute;left:1325.25px;top:826.55px"><g fill="currentColor"><path d="M9.400 1.500h5.200v7h4.300L12 15.400 5.100 8.500h4.300z"/><path fill-rule="evenodd" d="M1.400 15.600h5.700l2.200 2.200c1.500 1.500 3.900 1.500 5.400 0l2.200-2.200h5.700c.6 0 1 .4 1 1v4.500c0 .6-.4 1-1 1H1.400c-.6 0-1-.4-1-1v-4.500c0-.6.400-1 1-1z M16.800 19.200a.9.9 0 1 0 1.800 0 .9.9 0 1 0-1.800 0z M20 19.200a.9.9 0 1 0 1.800 0 .9.900 0 1 0-1.800 0z"/></g></svg><svg class="ic " width="19.2" height="19.2" viewBox="0 0 24 24" style="color:#337ab7;position:absolute;left:1288.4px;top:827.1999999999999px"><g fill="currentColor"><path d="M13.800 2.800h7.400v7.400l-2.600-2.600-4.200 4.200-2.200-2.200 4.200-4.200z"/><path d="M10.200 21.200H2.800v-7.400l2.600 2.600 4.200-4.200 2.200 2.200-4.200 4.200z"/></g></svg><svg class="ic " width="16" height="16" viewBox="0 0 24 24" style="color:#337ab7;position:absolute;left:1254.0px;top:828.3px"><path fill="currentColor" d="M2.300 3h19.400c.7 0 1 .8.500 1.300l-7.500 7.500v9.800c0 .7-.7 1-1.200.6l-3.800-3.400c-.3-.2-.4-.5-.4-.9v-6.100L1.800 4.300C1.300 3.800 1.600 3 2.300 3z"/></svg><div class="wline" style="left:307px;top:873.7px;width:1074px"></div><table class="t m" style="left:307px;top:874.6px;width:1074px;table-layout:fixed"><tr style="height:73.2px"><th style="width:82.2px"></th><th style="width:160.2px">New/Lost<br>Revenue</th><th style="width:144.1px">New/Lost<br>Clients</th><th style="width:246.0px">Growth/Contraction<br>Revenue</th><th style="width:236.4px">Growth/Contraction<br>Clients</th><th style="width:121.7px">Total $</th><th style="width:83.4px">Total<br>%</th></tr><tr style="height:47.4px"><td>Growth</td><td class="r">$7,686.00</td><td class="r">4</td><td class="r">$4,894.85</td><td class="r">28</td><td class="r">$12,580.85</td><td class="r">1.64%</td></tr><tr style="height:47.4px"><td>Decline</td><td class="r">($18,910.57)</td><td class="r">(3)</td><td class="r">($10,698.01)</td><td class="r">(33)</td><td class="r">($29,608.58)</td><td class="r">(3.87%)</td></tr><tr style="height:47.4px"><td>Net</td><td class="r"></td><td class="r"></td><td class="r"></td><td class="r"></td><td class="r">($17,027.73)</td><td class="r">(2.22%)</td></tr></table><div class="rz" style="left:1353.7px;top:1271px"></div><div class="wt lt" style="left:1422.5px;top:818.3px;letter-spacing:-0.56px">Recurring Revenue Concentration</div><svg class="ic " width="19.5" height="19.5" viewBox="0 0 24 24" style="color:#1185c9;position:absolute;left:1799.15px;top:828.25px"><g fill="currentColor"><path d="M2.500 21.500l1.300-5.600 4.300 4.300z"/><path d="M4.900 14.600L15.400 4.100l4.500 4.500L9.400 19.100z"/><path d="M16.500 3l1.300-1.300c.7-.7 1.700-.7 2.400 0l2.100 2.100c.7.700.7 1.700 0 2.400L21 7.500z"/></g><path d="M6.600 15.400l8.800-8.800" stroke="#fff" stroke-width="1.100"/></svg><div class="help" style="left:1839.5px;top:824px">?</div><svg class="ic " width="16" height="16" viewBox="0 0 24 24" style="color:#337ab7;position:absolute;left:2468.0px;top:828.5999999999999px"><g fill="currentColor"><path d="M8.400 1.600h7.200l1.300 2.900h4.300c.4 0 .7.300.7.700v1c0 .4-.3.700-.7.700H2.800c-.4 0-.7-.3-.7-.7v-1c0-.4.300-.7.700-.7h4.300z M9.600 3.300l-.5 1.200h5.800l-.5-1.200z" fill-rule="evenodd"/><path fill-rule="evenodd" d="M3.800 8h16.400v12.200c0 1.300-1 2.300-2.200 2.300H6c-1.200 0-2.200-1-2.200-2.300z M7.300 10.400v9.200h1.800v-9.200z M11.100 10.400v9.200h1.800v-9.200z M14.900 10.400v9.200h1.800v-9.200z"/></g></svg><svg class="ic " width="17.5" height="17.5" viewBox="0 0 24 24" style="color:#337ab7;position:absolute;left:2431.25px;top:826.55px"><g fill="currentColor"><path d="M9.400 1.500h5.200v7h4.300L12 15.400 5.100 8.500h4.300z"/><path fill-rule="evenodd" d="M1.400 15.600h5.700l2.200 2.200c1.500 1.500 3.900 1.500 5.400 0l2.200-2.200h5.700c.6 0 1 .4 1 1v4.500c0 .6-.4 1-1 1H1.400c-.6 0-1-.4-1-1v-4.500c0-.6.400-1 1-1z M16.800 19.200a.9.9 0 1 0 1.800 0 .9.9 0 1 0-1.800 0z M20 19.200a.9.9 0 1 0 1.800 0 .9.900 0 1 0-1.800 0z"/></g></svg><svg class="ic " width="19.2" height="19.2" viewBox="0 0 24 24" style="color:#337ab7;position:absolute;left:2394.4px;top:827.1999999999999px"><g fill="currentColor"><path d="M13.800 2.800h7.400v7.400l-2.600-2.600-4.200 4.200-2.200-2.200 4.200-4.200z"/><path d="M10.200 21.200H2.800v-7.400l2.600 2.600 4.200-4.200 2.200 2.200-4.200 4.200z"/></g></svg><svg class="ic " width="16" height="16" viewBox="0 0 24 24" style="color:#337ab7;position:absolute;left:2360.0px;top:828.3px"><path fill="currentColor" d="M2.300 3h19.400c.7 0 1 .8.500 1.300l-7.500 7.500v9.800c0 .7-.7 1-1.200.6l-3.800-3.400c-.3-.2-.4-.5-.4-.9v-6.100L1.800 4.300C1.300 3.800 1.600 3 2.300 3z"/></svg><div class="wline" style="left:1413px;top:873.7px;width:1074px"></div><svg class="abs" style="left:1413px;top:876px" width="1074" height="401" viewBox="1413 876 1074 401"><path d="M1950.7 1077.3L1950.70 939.36A4.0 4.0 0 0 1 1954.82 935.36A142.0 142.0 0 0 1 2024.68 956.09A4.0 4.0 0 0 1 2025.95 961.69Z" fill="#2caffe" stroke="#ffffff" stroke-width="1.5" stroke-linejoin="round"/><path d="M1950.7 1077.3L2025.95 961.69A4.0 4.0 0 0 1 2031.58 960.59A142.0 142.0 0 0 1 2070.78 1001.50A4.0 4.0 0 0 1 2069.43 1007.08Z" fill="#544fc5" stroke="#ffffff" stroke-width="1.5" stroke-linejoin="round"/><path d="M1950.7 1077.3L2069.43 1007.08A4.0 4.0 0 0 1 2074.97 1008.59A142.0 142.0 0 0 1 2091.76 1060.95A4.0 4.0 0 0 1 2088.13 1065.40Z" fill="#00e272" stroke="#ffffff" stroke-width="1.5" stroke-linejoin="round"/><path d="M1950.7 1077.3L2088.13 1065.40A4.0 4.0 0 0 1 2092.47 1069.15A142.0 142.0 0 0 1 2086.02 1120.33A4.0 4.0 0 0 1 2080.89 1122.89Z" fill="#fe6a35" stroke="#ffffff" stroke-width="1.5" stroke-linejoin="round"/><path d="M1950.7 1077.3L2080.89 1122.89A4.0 4.0 0 0 1 2083.30 1128.10A142.0 142.0 0 0 1 2058.61 1169.60A4.0 4.0 0 0 1 2052.89 1169.96Z" fill="#6b8abc" stroke="#ffffff" stroke-width="1.5" stroke-linejoin="round"/><path d="M1950.7 1077.3L2052.89 1169.96A4.0 4.0 0 0 1 2053.09 1175.69A142.0 142.0 0 0 1 2029.82 1195.22A4.0 4.0 0 0 1 2024.21 1194.03Z" fill="#d568fb" stroke="#ffffff" stroke-width="1.5" stroke-linejoin="round"/><path d="M1950.7 1077.3L2024.21 1194.03A4.0 4.0 0 0 1 2022.85 1199.60A142.0 142.0 0 0 1 2000.34 1210.34A4.0 4.0 0 0 1 1995.15 1207.88Z" fill="#2ee0ca" stroke="#ffffff" stroke-width="1.5" stroke-linejoin="round"/><path d="M1950.7 1077.3L1995.15 1207.88A4.0 4.0 0 0 1 1992.55 1212.99A142.0 142.0 0 0 1 1970.12 1217.97A4.0 4.0 0 0 1 1965.60 1214.44Z" fill="#fa4b42" stroke="#ffffff" stroke-width="1.5" stroke-linejoin="round"/><path d="M1950.7 1077.3L1965.60 1214.44A4.0 4.0 0 0 1 1961.94 1218.85A142.0 142.0 0 0 1 1949.12 1219.29A4.0 4.0 0 0 1 1945.16 1215.13Z" fill="#feb56a" stroke="#ffffff" stroke-width="1.5" stroke-linejoin="round"/><path d="M1950.7 1077.3L1945.16 1215.13A4.0 4.0 0 0 1 1940.89 1218.96A142.0 142.0 0 0 1 1928.64 1217.58A4.0 4.0 0 0 1 1925.33 1212.89Z" fill="#91e8e1" stroke="#ffffff" stroke-width="1.5" stroke-linejoin="round"/><path d="M1950.7 1077.3L1925.33 1212.89A4.0 4.0 0 0 1 1920.54 1216.06A142.0 142.0 0 0 1 1946.58 935.36A4.0 4.0 0 0 1 1950.70 939.36Z" fill="#2caffe" stroke="#ffffff" stroke-width="1.5" stroke-linejoin="round"/><path d="M1991.4 940 L2002.9 902.4 L2009.4 902.4" fill="none" stroke="#2caffe" stroke-width="1.33"/><text x="2023.1" y="908.8000000000001" text-anchor="start" font-size="12.85" font-weight="bold" fill="#000000">Client 2231</text><path d="M2054.1 978.5 L2082.9 952.1 L2089.4 952.1" fill="none" stroke="#544fc5" stroke-width="1.33"/><text x="2103.1" y="958.4000000000001" text-anchor="start" font-size="12.85" font-weight="bold" fill="#000000">Client 3039</text><path d="M2086.1 1033.4 L2123.7 1021.3 L2130.9 1021.3" fill="none" stroke="#00e272" stroke-width="1.33"/><text x="2144.6" y="1027.3" text-anchor="start" font-size="12.85" font-weight="bold" fill="#000000">Client 3006</text><path d="M2092 1095.8 L2131.8 1101 L2139 1101" fill="none" stroke="#fe6a35" stroke-width="1.33"/><text x="2152.4" y="1106.3" text-anchor="start" font-size="12.85" font-weight="bold" fill="#000000">Client 696</text><path d="M2073.1 1151.6 L2079.6 1155.5 L2126.9 1146.4" fill="none" stroke="#6b8abc" stroke-width="1.33"/><text x="2140.7" y="1151.4" text-anchor="start" font-size="12.85" font-weight="bold" fill="#000000">Client 2704</text><path d="M2042 1186.5 L2047.9 1193.1 L2112.2 1174.4" fill="none" stroke="#d568fb" stroke-width="1.33"/><text x="2126" y="1180.8" text-anchor="start" font-size="12.85" font-weight="bold" fill="#000000">Client 888</text><path d="M2012 1206.1 L2015.9 1213.3 L2090.4 1203.5" fill="none" stroke="#2ee0ca" stroke-width="1.33"/><text x="2104.7" y="1208.5" text-anchor="start" font-size="12.85" font-weight="bold" fill="#000000">Client 2608</text><path d="M1981.6 1216.9 L1984.9 1232.2 L2055.1 1232.2" fill="none" stroke="#fa4b42" stroke-width="1.33"/><text x="2069.8" y="1237.9" text-anchor="start" font-size="12.85" font-weight="bold" fill="#000000">Client 2754</text><path d="M1955.5 1220.2 L1957.1 1260.3 L1963.7 1260.3" fill="none" stroke="#feb56a" stroke-width="1.33"/><text x="1977.7" y="1265.7" text-anchor="start" font-size="12.85" font-weight="bold" fill="#000000">Client 2768</text><path d="M1934.3 1220.2 L1929.4 1259 L1922.9 1259" fill="none" stroke="#91e8e1" stroke-width="1.33"/><text x="1908.2" y="1264.7" text-anchor="end" font-size="12.85" font-weight="bold" fill="#000000">Client 91</text><path d="M1808.6 1064.7 L1769.4 1060.2 L1762.2 1060.2" fill="none" stroke="#2caffe" stroke-width="1.33"/><text x="1748.2" y="1066.2" text-anchor="end" font-size="12.85" font-weight="bold" fill="#000000">Other</text></svg><div class="rz" style="left:2460.7px;top:1271px"></div></div></body></html>
